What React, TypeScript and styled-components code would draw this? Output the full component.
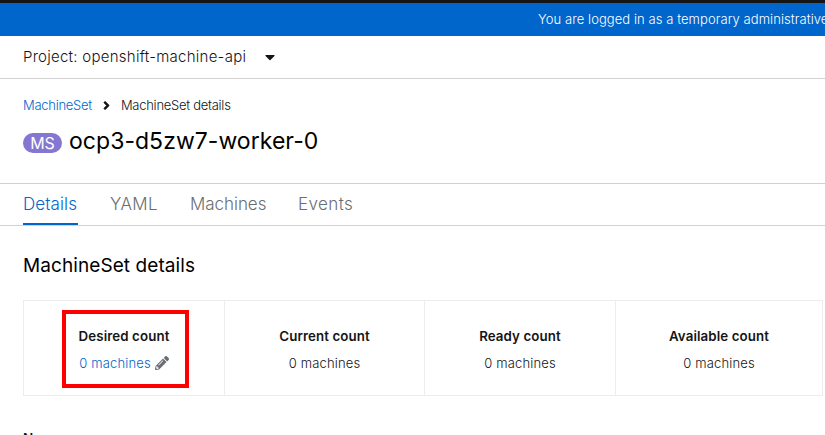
import React from 'react';
import styled, { createGlobalStyle } from 'styled-components';
import { FaAngleRight, FaCaretDown, FaPencilAlt } from 'react-icons/fa';

const GlobalStyle = createGlobalStyle`
  *, *::before, *::after { box-sizing: border-box; }
  body {
    margin: 0;
    overflow: hidden;
    background: #fff;
    color: #151515;
    font-family: Inter, "Liberation Sans", sans-serif;
    font-size: 13px;
  }
  h1, h2, p { margin: 0; }
`;

const Page = styled.div`
  display: flex;
  flex-direction: column;
  width: 100%;
  height: 435px;
  overflow: hidden;
  white-space: nowrap;
`;

const Masthead = styled.div`
  flex: none;
  height: 3px;
  background: #151515;
`;

const Banner = styled.div`
  flex: none;
  height: 33px;
  padding-left: 538px;
  overflow: hidden;
  background: #0066cc;
  color: #fff;
  font-size: 13px;
  font-weight: 300;
  line-height: 33px;
  letter-spacing: 0.07px;
`;

const ProjectBar = styled.div`
  display: flex;
  flex: none;
  align-items: center;
  gap: 16px;
  height: 43px;
  padding: 0 23px;
  border-bottom: 1px solid #d2d2d2;
  font-size: 15px;
  font-weight: 350;
  line-height: 42px;
  letter-spacing: 0.26px;
`;

const Heading = styled.header`
  flex: none;
  height: 104px;
  padding: 16px 23px 0;
`;

const Breadcrumb = styled.nav`
  display: flex;
  align-items: center;
  height: 20px;
  font-size: 13px;
  font-weight: 300;
  line-height: 20px;
  letter-spacing: -0.27px;

  svg {
    margin: 0 8px 0 8px;
    stroke: currentColor;
    stroke-width: 22px;
  }
`;

const Link = styled.span`
  color: #0066cc;
`;

const TitleRow = styled.div`
  display: flex;
  align-items: center;
  gap: 7px;
  height: 36px;
  margin-top: 8px;
`;

const Badge = styled.span`
  width: 39px;
  height: 20px;
  margin-top: 3px;
  border-radius: 10px;
  background: #8476d1;
  color: #fff;
  font-size: 16px;
  line-height: 20px;
  text-align: center;
`;

const Title = styled.h1`
  color: #000;
  font-size: 23px;
  font-weight: 400;
  line-height: 36px;
  letter-spacing: 0.04px;
`;

const Tabs = styled.nav`
  display: flex;
  flex: none;
  gap: 32px;
  height: 43px;
  padding: 0 23px;
  border-top: 1px solid #d2d2d2;
  border-bottom: 1px solid #d2d2d2;
`;

const Tab = styled.span<{ $width: number; $active?: boolean; $spacing: number }>`
  width: ${({ $width }) => $width}px;
  border-bottom: 2px solid ${({ $active }) => ($active ? '#0066cc' : 'transparent')};
  color: ${({ $active }) => ($active ? '#0066cc' : '#6a6e73')};
  font-size: 17px;
  font-weight: 300;
  line-height: 41px;
  letter-spacing: ${({ $spacing }) => $spacing}px;
`;

const Details = styled.main`
  flex: none;
  padding: 25px 0 0 23px;
`;

const SectionTitle = styled.h2`
  color: #000;
  font-size: 19px;
  font-weight: 400;
  line-height: 30px;
  letter-spacing: 0.08px;
`;

const Counts = styled.div`
  display: grid;
  grid-template-columns: 201px 200px 191px 207px;
  width: 800px;
  height: 96px;
  margin-top: 19px;
  border: 1px solid #ededed;
  border-left: 0;
`;

const Count = styled.div`
  display: flex;
  flex-direction: column;
  align-items: center;
  padding-top: 21px;
  border-left: 1px solid #ededed;
`;

const CountLabel = styled.div`
  height: 28px;
  font-size: 13.3px;
  font-weight: 600;
  line-height: 28px;
  letter-spacing: 0.1px;
`;

const CountValue = styled.div<{ $editable?: boolean }>`
  display: flex;
  align-items: center;
  gap: 4px;
  height: 26px;
  color: ${({ $editable }) => ($editable ? '#0066cc' : '#151515')};
  font-size: 13px;
  font-weight: 300;
  line-height: 26px;
  letter-spacing: 0.16px;

  svg { color: #6a6e73; }
`;

const Highlight = styled.div`
  display: flex;
  flex-direction: column;
  align-items: center;
  width: 127px;
  height: 78px;
  margin: -12px -3px 0 0;
  padding: 8px 3px 0 0;
  border: 4px solid #ff0000;
`;

const Field = styled.p`
  margin-top: 32px;
  font-size: 13.5px;
  font-weight: 600;
  line-height: 20px;
`;

const tabs = [
  { label: 'Details', width: 55, spacing: 0.1, active: true },
  { label: 'YAML', width: 48, spacing: 0.4 },
  { label: 'Machines', width: 76, spacing: -0.05 },
  { label: 'Events', width: 55, spacing: 0.4 },
];

const counts = ['Current count', 'Ready count', 'Available count'];

export default function App() {
  return (
    <>
      <GlobalStyle />
      <Page>
        <Masthead />
        <Banner>You are logged in as a temporary administrative user.</Banner>
        <ProjectBar>
          <span>Project: openshift-machine-api</span>
          <FaCaretDown size={16} />
        </ProjectBar>
        <Heading>
          <Breadcrumb>
            <Link>MachineSet</Link>
            <FaAngleRight size={13} />
            <span>MachineSet details</span>
          </Breadcrumb>
          <TitleRow>
            <Badge>MS</Badge>
            <Title>ocp3-d5zw7-worker-0</Title>
          </TitleRow>
        </Heading>
        <Tabs>
          {tabs.map(({ label, width, spacing, active }) => (
            <Tab key={label} $width={width} $spacing={spacing} $active={active}>{label}</Tab>
          ))}
        </Tabs>
        <Details>
          <SectionTitle>MachineSet details</SectionTitle>
          <Counts>
            <Count>
              <Highlight>
                <CountLabel>Desired count</CountLabel>
                <CountValue $editable>
                  0 machines
                  <FaPencilAlt size={14} />
                </CountValue>
              </Highlight>
            </Count>
            {counts.map((label) => (
              <Count key={label}>
                <CountLabel>{label}</CountLabel>
                <CountValue>0 machines</CountValue>
              </Count>
            ))}
          </Counts>
          <Field>Name</Field>
        </Details>
      </Page>
    </>
  );
}
